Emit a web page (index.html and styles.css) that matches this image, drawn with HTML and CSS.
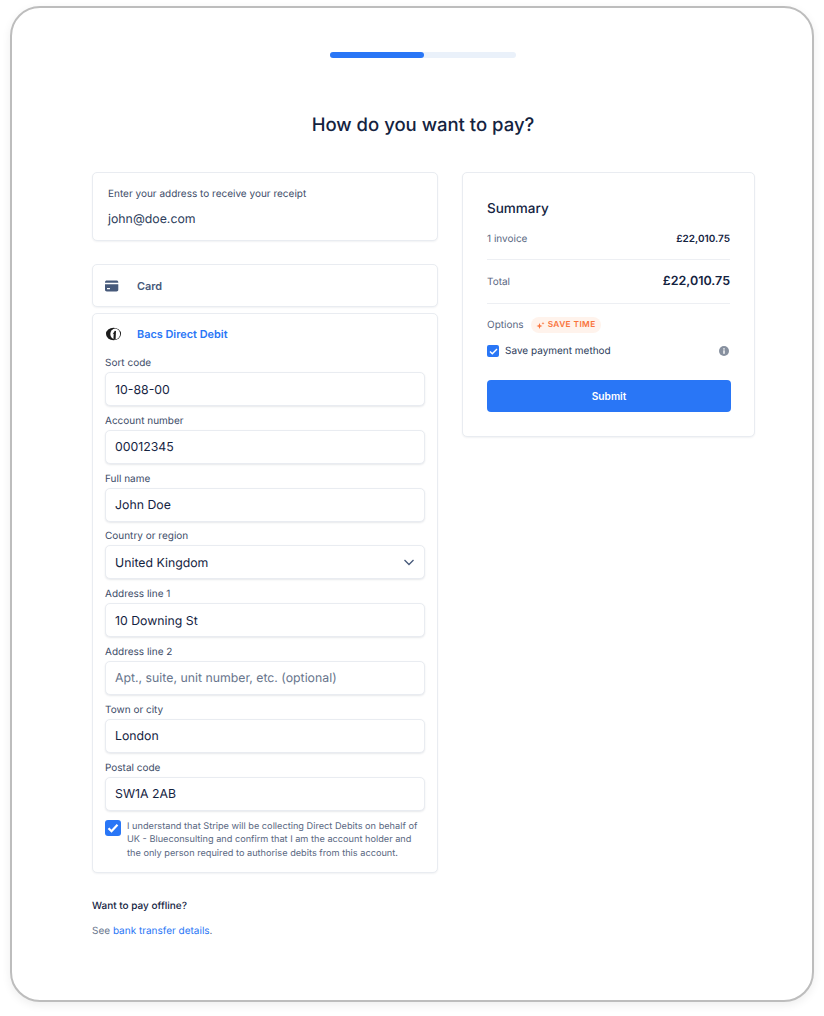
FILE: index.html
```html
<!DOCTYPE html>
<html>
<head>
	<meta charset="UTF-8">
	<title>How do you want to pay?</title>
	<link rel="stylesheet" href="styles.css">
</head>
<body>
	<div class="frame">
		<div class="progress"><div class="progress-fill"></div></div>
		<h1 class="title">How do you want to pay?</h1>
		<div class="columns">
			<div class="left">
				<div class="panel email">
					<div class="email-label">Enter your address to receive your receipt</div>
					<div class="email-value">john@doe.com</div>
				</div>

				<div class="panel method">
					<svg class="method-icon" width="16" height="16" viewBox="0 0 16 16"><path fill="#46597a" d="M0 4.300C0 3.300.8 2.600 1.800 2.600h9.700c1 0 1.800.7 1.800 1.700v.5H0zM0 6.300h13.300v5.400c0 1-.8 1.700-1.800 1.700H1.800C.8 13.400 0 12.700 0 11.700zM2 9.900v1.300h3V9.900z"/></svg>
					<span class="method-name">Card</span>
				</div>

				<div class="panel bacs">
					<div class="bacs-head">
						<svg class="method-icon" width="16" height="16" viewBox="0 0 16 16"><ellipse cx="8.500" cy="8" rx="7.500" ry="6.200" fill="#1c1c1c"/><ellipse cx="10.200" cy="8" rx="4.900" ry="5.400" fill="#fff"/><path fill="#1c1c1c" d="M9.800 4.800l1.200.3-.4 8.400-2.200-.3.3-5.400-1.100.5z"/></svg>
						<span class="method-name active">Bacs Direct Debit</span>
					</div>

					<label class="field-label">Sort code</label>
					<div class="input">10-88-00</div>
					<label class="field-label">Account number</label>
					<div class="input">00012345</div>
					<label class="field-label">Full name</label>
					<div class="input">John Doe</div>
					<label class="field-label">Country or region</label>
					<div class="input select">
						United Kingdom
						<svg width="12" height="12" viewBox="0 0 12 12"><path d="M1.500 4l4.500 4.500L10.500 4" fill="none" stroke="#46597a" stroke-width="1.300"/></svg>
					</div>
					<label class="field-label">Address line 1</label>
					<div class="input">10 Downing St</div>
					<label class="field-label">Address line 2</label>
					<div class="input placeholder">Apt., suite, unit number, etc. (optional)</div>
					<label class="field-label">Town or city</label>
					<div class="input">London</div>
					<label class="field-label">Postal code</label>
					<div class="input">SW1A 2AB</div>

					<div class="mandate">
						<span class="check big">
							<svg width="12" height="10" viewBox="0 0 12 10"><path d="M1.500 5.200l3 3 6-6.500" fill="none" stroke="#fff" stroke-width="2.200"/></svg>
						</span>
						<p>I understand that Stripe will be collecting Direct Debits on behalf of UK - Blueconsulting and confirm that I am the account holder and the only person required to authorise debits from this account.</p>
					</div>
				</div>

				<div class="offline">
					<div class="offline-head">Want to pay offline?</div>
					<div class="offline-text">See <a href="#">bank transfer details</a>.</div>
				</div>
			</div>

			<div class="panel summary">
				<h2>Summary</h2>
				<div class="row first">
					<span>1 invoice</span>
					<strong>£22,010.75</strong>
				</div>
				<div class="row total">
					<span>Total</span>
					<strong>£22,010.75</strong>
				</div>
				<div class="options">
					<span>Options</span>
					<span class="badge">
						<svg width="9" height="9" viewBox="0 0 9 9"><path fill="#f9743c" d="M3.500 2l.8 2.200 2.200.8-2.200.8-.8 2.200-.8-2.200L.5 5l2.200-.8z"/><path fill="#f9743c" d="M7 .8l.4 1.100 1.100.4-1.100.4L7 3.800l-.4-1.100-1.100-.4 1.100-.4z"/></svg>
						SAVE TIME
					</span>
				</div>
				<div class="save">
					<span class="check">
						<svg width="9" height="7" viewBox="0 0 9 7"><path d="M1 3.500l2.300 2.300L8 1" fill="none" stroke="#fff" stroke-width="1.400"/></svg>
					</span>
					<span class="save-text">Save payment method</span>
					<svg class="info" width="10" height="10" viewBox="0 0 10 10"><circle cx="5" cy="5" r="5" fill="#87909f"/><rect x="4.300" y="4.300" width="1.400" height="3.500" fill="#fff"/><rect x="4.300" y="2.200" width="1.400" height="1.400" fill="#fff"/></svg>
				</div>
				<button class="submit">Submit</button>
			</div>
		</div>
	</div>
</body>
</html>
```

FILE: styles.css
```css
html, body {
	margin: 0;
	padding: 0;
	background: #fff;
}

body {
	font-family: Inter, "Liberation Sans", sans-serif;
	text-rendering: geometricPrecision;
	color: #14233f;
	height: 1016px;
	overflow: hidden;
	padding: 6px 10px 0;
	box-sizing: border-box;
}

.frame {
	box-sizing: border-box;
	width: 804px;
	height: 996px;
	border: 2px solid #bdbdbd;
	border-radius: 30px;
	box-shadow: 0 3px 10px rgba(0, 0, 0, 0.07);
	padding: 44px 58px 0 80px;
	background: #fff;
}

.progress {
	width: 186px;
	height: 6px;
	margin: 0 auto 0 238px;
	background: #eaf1fa;
	border-radius: 3px;
}

.progress-fill {
	width: 94px;
	height: 6px;
	background: #2976f6;
	border-radius: 3px;
}

.title {
	margin: 55px 0 0 0;
	height: 24px;
	width: 662px;
	font-size: 18.500px;
	line-height: 24px;
	font-weight: 500;
	text-align: center;
	color: #14233f;
}

.columns {
	display: flex;
	gap: 24px;
	margin-top: 35px;
	align-items: flex-start;
}

.left {
	width: 346px;
	flex: none;
}

.panel {
	box-sizing: border-box;
	background: #fff;
	border: 1px solid #e9ecf1;
	border-radius: 5px;
	box-shadow: 0 1px 2px rgba(20, 35, 63, 0.06);
}

.email {
	height: 69px;
	padding: 14px 15px 0;
	margin-bottom: 23px;
}

.email-label {
	font-size: 10px;
	line-height: 14px;
	color: #3d4c68;
}

.email-value {
	margin-top: 9px;
	font-size: 12.300px;
	line-height: 18px;
	color: #2c3c5a;
}

.method {
	height: 43px;
	display: flex;
	align-items: center;
	padding-left: 12px;
	margin-bottom: 6px;
}

.method-icon {
	flex: none;
	margin-right: 16px;
}

.method-name {
	font-size: 10.900px;
	font-weight: 600;
	color: #46597a;
}

.method-name.active {
	color: #2976f6;
}

.bacs {
	height: 560px;
	padding: 0 12px;
}

.bacs-head {
	display: flex;
	align-items: center;
	height: 40px;
}

.field-label {
	display: block;
	font-size: 10px;
	line-height: 14px;
	height: 14px;
	margin-top: 2px;
	margin-bottom: 2px;
	color: #3d4c68;
}

.input {
	box-sizing: border-box;
	height: 34px;
	margin-bottom: 7.800px;
	padding: 0 9px;
	display: flex;
	align-items: center;
	justify-content: space-between;
	font-size: 12.300px;
	color: #14233f;
	background: #fff;
	border: 1px solid #e9ecf1;
	border-radius: 5px;
	box-shadow: 0 1px 2px rgba(20, 35, 63, 0.1);
}

.input.placeholder {
	color: #68758c;
}

.mandate {
	display: flex;
	gap: 6px;
	margin-top: 9px;
}

.mandate p {
	margin: 0;
	font-size: 9.200px;
	line-height: 13.500px;
	color: #5a6882;
}

.check {
	box-sizing: border-box;
	flex: none;
	display: flex;
	align-items: center;
	justify-content: center;
	width: 12px;
	height: 12px;
	background: #2976f6;
	border-radius: 2px;
}

.check.big {
	width: 16px;
	height: 16px;
	border-radius: 3px;
}

.offline {
	margin-top: 26px;
	font-size: 10px;
	line-height: 14px;
}

.offline-head {
	font-weight: 500;
	color: #14233f;
}

.offline-text {
	margin-top: 11px;
	color: #68758c;
}

.offline-text a {
	color: #2976f6;
	text-decoration: none;
}

.summary {
	width: 293px;
	height: 265px;
	padding: 28px 24px 0;
}

.summary h2 {
	margin: 0;
	font-size: 13.500px;
	line-height: 16px;
	font-weight: 500;
	color: #14233f;
}

.row {
	box-sizing: border-box;
	display: flex;
	justify-content: space-between;
	align-items: center;
	height: 44px;
	font-size: 10px;
	color: #5a6882;
	border-bottom: 1px solid #edeff3;
}

.row.first {
	height: 43px;
	padding-top: 2px;
}

.row strong {
	font-weight: 600;
	color: #14233f;
}

.row.total strong {
	font-size: 12.500px;
}

.options {
	display: flex;
	align-items: center;
	gap: 7px;
	height: 16px;
	margin-top: 13px;
	font-size: 10px;
	color: #5a6882;
}

.badge {
	display: flex;
	align-items: center;
	gap: 3px;
	height: 16px;
	padding: 0 5px;
	border-radius: 8px;
	background: #fff3ec;
	color: #f9743c;
	font-size: 8.300px;
	font-weight: 600;
	letter-spacing: 0.4px;
}

.save {
	display: flex;
	align-items: center;
	height: 14px;
	margin-top: 11px;
	font-size: 10px;
	color: #2c3c5a;
}

.save-text {
	margin-left: 6px;
	flex: 1;
}

.info {
	margin-right: 1px;
}

.submit {
	display: block;
	width: 244px;
	height: 32px;
	margin-top: 22px;
	border: 0;
	border-radius: 4px;
	background: #2976f6;
	color: #fff;
	font-family: inherit;
	font-size: 10.200px;
	font-weight: 600;
}
```
